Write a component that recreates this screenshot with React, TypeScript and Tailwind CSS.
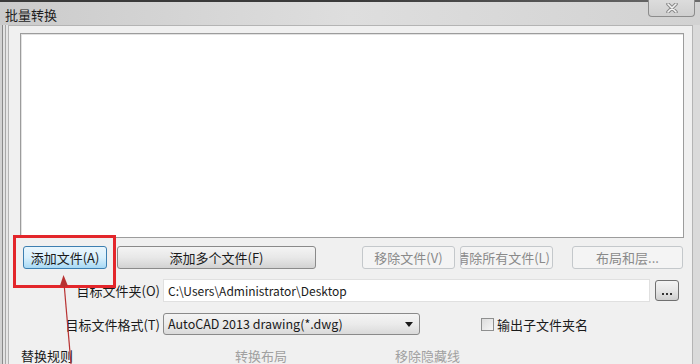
import React from "react";

const font = { fontFamily: '"Noto Sans CJK SC", "Noto Sans", sans-serif' };

function Btn({ children, w, kind = "normal" }: { children: React.ReactNode; w: string; kind?: "normal" | "hot" | "disabled" }) {
  const base = "h-[23px] rounded-[3px] border flex items-center justify-center text-[13px] leading-none overflow-hidden whitespace-nowrap " + w;
  if (kind === "hot")
    return <div className={base + " border-[#3c7fb1] bg-linear-to-b from-[#eaf6fd] via-[#d9f0fc] to-[#a7d9f5] text-[#1a1a1a]"}>{children}</div>;
  if (kind === "disabled")
    return <div className={base + " border-[#c4c8cb] bg-[#f4f4f4] text-[#8a8a8a]"}>{children}</div>;
  return <div className={base + " border-[#8a8a8a] bg-linear-to-b from-[#f4f4f4] via-[#e8e8e8] to-[#d2d2d2] text-[#1a1a1a]"}>{children}</div>;
}

export default function App() {
  return (
    <div className="relative w-[700px] h-[364px] overflow-hidden bg-[#d6d6d6] text-[#1a1a1a]" style={font}>
      {/* top dark strip */}
      <div className="h-[2px] bg-linear-to-r from-[#3a3a3a] via-[#3a3a3a] to-[#6a6a6a]" />
      {/* title bar */}
      <div className="h-[23px] flex items-start justify-between bg-linear-to-r from-[#cbcbcb] via-[#dedede] to-[#d2d2d2]">
        <div className="pl-[5px] pt-[5px] text-[13px] leading-[16px] text-[#1e1e1e]">批量转换</div>
        <div className="-mt-[2px] mr-[5px] w-[47px] h-[17px] rounded-b-[4px] border border-t-0 border-[#8c8c8c] bg-linear-to-b from-[#dcdcdc] to-[#cfcfcf] flex items-center justify-center">
          <svg width="14" height="10" viewBox="0 0 14 10">
            <path d="M3 1 L11 9 M11 1 L3 9" stroke="#8a8a8a" strokeWidth="3.6" strokeLinecap="round" />
            <path d="M3 1 L11 9 M11 1 L3 9" stroke="#f4f4f4" strokeWidth="1.6" strokeLinecap="round" />
          </svg>
        </div>
      </div>
      {/* body */}
      <div className="flex h-[339px]">
        {/* left frame */}
        <div className="w-[8px] flex">
          <div className="w-[2px] bg-[#d2d2d2]" />
          <div className="w-[1px] bg-[#8a8a8a]" />
          <div className="w-[2px] bg-[#e2e2e2]" />
          <div className="w-[1px] bg-[#a8a8a8]" />
          <div className="w-[2px] bg-[#e6e6e6]" />
        </div>
        {/* client area */}
        <div className="w-[685px] border-t border-l border-r border-[#b4b4b4] bg-[#f0f0f0] pl-[11px] pt-[7px]">
          {/* list box */}
          <div className="w-[664px] h-[205px] border border-[#9c9c9c] bg-white">
            <div className="w-full h-full border-t border-l border-[#e2e2e2]" />
          </div>
          {/* buttons row */}
          <div className="flex items-center pl-[3px] mt-[8px]">
            <Btn w="w-[84px]" kind="hot">添加文件(A)</Btn>
            <div className="ml-[10px]"><Btn w="w-[199px]">添加多个文件(F)</Btn></div>
            <div className="ml-[46px]"><Btn w="w-[93px]" kind="disabled">移除文件(V)</Btn></div>
            <div className="ml-[5px]">
              <div className="h-[23px] w-[93px] rounded-[3px] border border-[#c4c8cb] bg-[#f4f4f4] text-[#8a8a8a] flex items-center justify-end pr-[2px] overflow-hidden whitespace-nowrap text-[13px] leading-none">
                清除所有文件(L)
              </div>
            </div>
            <div className="ml-[19px]"><Btn w="w-[111px]" kind="disabled">布局和层...</Btn></div>
          </div>
          {/* folder row */}
          <div className="flex items-center mt-[10px] h-[23px]">
            <div className="w-[143px] text-right text-[13px] leading-none pr-[3px]">目标文件夹(O)</div>
            <div className="w-[487px] h-[23px] border border-[#e0e0e0] bg-white flex items-center pl-[4px] text-[12px] leading-none">
              C:\Users\Administrator\Desktop
            </div>
            <div className="ml-[5px] w-[24px] h-[21px] rounded-[3px] border border-[#707070] bg-linear-to-b from-[#f4f4f4] via-[#e6e6e6] to-[#cfcfcf] flex items-end justify-center pb-[5px]">
              <div className="flex gap-[2px]">
                <div className="w-[2px] h-[2px] bg-[#333]" />
                <div className="w-[2px] h-[2px] bg-[#333]" />
                <div className="w-[2px] h-[2px] bg-[#333]" />
              </div>
            </div>
          </div>
          {/* format row */}
          <div className="flex items-center mt-[11px] h-[22px]">
            <div className="w-[143px] text-right text-[13px] leading-none pr-[3px]">目标文件格式(T)</div>
            <div className="w-[257px] h-[22px] rounded-[3px] border border-[#8a8a8a] bg-linear-to-b from-[#f4f4f4] via-[#ebebeb] to-[#dadada] flex items-center justify-between pl-[4px] pr-[6px] text-[12.5px] leading-none">
              <span>AutoCAD 2013 drawing(*.dwg)</span>
              <svg width="8" height="5" viewBox="0 0 8 5"><path d="M0 0 L8 0 L4 5 Z" fill="#1a1a1a" /></svg>
            </div>
            <div className="ml-[61px] w-[13px] h-[13px] border border-[#8e8f8f] bg-linear-to-br from-[#dcdcdc] to-[#f6f6f6]" />
            <div className="ml-[3px] text-[13px] leading-none">输出子文件夹名</div>
          </div>
          {/* rules row */}
          <div className="flex items-center mt-[14px] text-[13px] leading-none">
            <div className="w-[60px] ml-[1px]">替换规则</div>
            <div className="ml-[154px] text-[#a0a0a0]">转换布局</div>
            <div className="ml-[108px] text-[#a0a0a0]">移除隐藏线</div>
          </div>
        </div>
        {/* right frame */}
        <div className="w-[7px] bg-[#dadada]" />
      </div>

      {/* red annotation rectangle */}
      <div className="absolute left-[13px] top-[235px] w-[103px] h-[53px] border-[3px] border-[#e3262b]" />
      {/* red arrow */}
      <svg className="absolute left-0 top-0" width="700" height="364" viewBox="0 0 700 364">
        <line x1="71" y1="364" x2="64" y2="283" stroke="#b83232" strokeWidth="1.2" />
        <path d="M63.5 275 L59.5 287 L68 286 Z" fill="#b83232" />
      </svg>
    </div>
  );
}
